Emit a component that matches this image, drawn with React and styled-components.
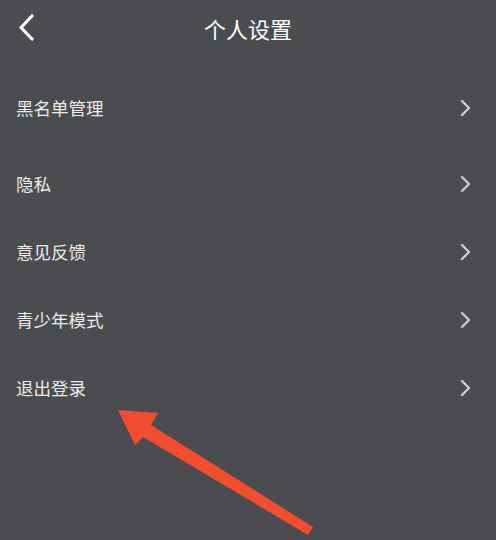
import React from "react";
import styled, { createGlobalStyle } from "styled-components";

const GlobalStyle = createGlobalStyle`
  html, body {
    margin: 0;
    padding: 0;
    background: #4b4c50;
  }
  body {
    font-family: "Noto Sans CJK SC", "Noto Sans", sans-serif;
  }
`;

const Screen = styled.div`
  position: relative;
  width: 496px;
  height: 540px;
  overflow: hidden;
  background: #4b4c50;
  display: flex;
  flex-direction: column;
`;

const Header = styled.header`
  height: 56px;
  display: grid;
  grid-template-columns: 56px 1fr 56px;
  align-items: center;
`;

const BackButton = styled.button`
  border: none;
  background: none;
  padding: 0 0 0 18px;
  height: 56px;
  display: flex;
  align-items: center;
  cursor: pointer;
`;

const Title = styled.h1`
  margin: 0;
  text-align: center;
  color: #ffffff;
  font-size: 22px;
  font-weight: 400;
  line-height: 56px;
`;

const List = styled.ul`
  list-style: none;
  margin: 0;
  padding: 18px 0 0;
  display: flex;
  flex-direction: column;
`;

const Row = styled.li`
  height: 68px;
  margin-bottom: ${({ $spaced }) => ($spaced ? "8px" : "0")};
  display: flex;
  align-items: center;
  justify-content: space-between;
  padding: 0 24px 0 16px;
`;

const Label = styled.span`
  color: #ececec;
  font-size: 17.5px;
  line-height: 1;
`;

const Annotation = styled.svg`
  position: absolute;
  left: 0;
  top: 0;
  pointer-events: none;
`;

const items = ["黑名单管理", "隐私", "意见反馈", "青少年模式", "退出登录"];

const BackIcon = () => (
  <svg width="18" height="28" viewBox="0 0 18 28">
    <path d="M14 2 L3 13.5 L14 25" fill="none" stroke="#ffffff" strokeWidth="3.2" strokeLinecap="round" strokeLinejoin="round" />
  </svg>
);

const Chevron = () => (
  <svg width="12" height="18" viewBox="0 0 12 18">
    <path d="M2 2 L9 9 L2 16" fill="none" stroke="#c9c9cb" strokeWidth="2.4" strokeLinecap="round" strokeLinejoin="round" />
  </svg>
);

export default function App() {
  return (
    <Screen>
      <GlobalStyle />
      <Header>
        <BackButton aria-label="返回">
          <BackIcon />
        </BackButton>
        <Title>个人设置</Title>
        <span />
      </Header>
      <List>
        {items.map((text, i) => (
          <Row key={text} $spaced={i === 0}>
            <Label>{text}</Label>
            <Chevron />
          </Row>
        ))}
      </List>
      <Annotation width="496" height="540" viewBox="0 0 496 540">
        <polygon
          points="118,410 158,413 151,425 313,527 308,535 143,437 135,445"
          fill="#f04e2f"
          strokeLinejoin="round"
        />
      </Annotation>
    </Screen>
  );
}
